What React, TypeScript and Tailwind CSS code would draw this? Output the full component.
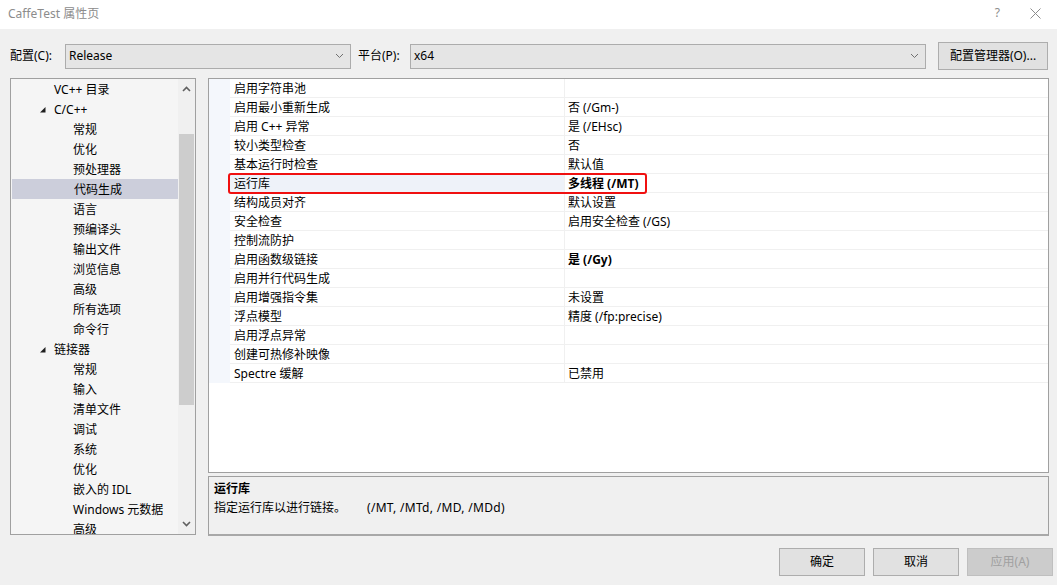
import React from "react";

type Prop = { name: string; value: string; bold?: boolean; selected?: boolean };

const props: Prop[] = [
  { name: "启用字符串池", value: "" },
  { name: "启用最小重新生成", value: "否 (/Gm-)" },
  { name: "启用 C++ 异常", value: "是 (/EHsc)" },
  { name: "较小类型检查", value: "否" },
  { name: "基本运行时检查", value: "默认值" },
  { name: "运行库", value: "多线程 (/MT)", bold: true, selected: true },
  { name: "结构成员对齐", value: "默认设置" },
  { name: "安全检查", value: "启用安全检查 (/GS)" },
  { name: "控制流防护", value: "" },
  { name: "启用函数级链接", value: "是 (/Gy)", bold: true },
  { name: "启用并行代码生成", value: "" },
  { name: "启用增强指令集", value: "未设置" },
  { name: "浮点模型", value: "精度 (/fp:precise)" },
  { name: "启用浮点异常", value: "" },
  { name: "创建可热修补映像", value: "" },
  { name: "Spectre 缓解", value: "已禁用" },
];

type Node = { label: string; level: 1 | 2; open?: boolean; selected?: boolean };

const tree: Node[] = [
  { label: "VC++ 目录", level: 1 },
  { label: "C/C++", level: 1, open: true },
  { label: "常规", level: 2 },
  { label: "优化", level: 2 },
  { label: "预处理器", level: 2 },
  { label: "代码生成", level: 2, selected: true },
  { label: "语言", level: 2 },
  { label: "预编译头", level: 2 },
  { label: "输出文件", level: 2 },
  { label: "浏览信息", level: 2 },
  { label: "高级", level: 2 },
  { label: "所有选项", level: 2 },
  { label: "命令行", level: 2 },
  { label: "链接器", level: 1, open: true },
  { label: "常规", level: 2 },
  { label: "输入", level: 2 },
  { label: "清单文件", level: 2 },
  { label: "调试", level: 2 },
  { label: "系统", level: 2 },
  { label: "优化", level: 2 },
  { label: "嵌入的 IDL", level: 2 },
  { label: "Windows 元数据", level: 2 },
  { label: "高级", level: 2 },
];

function Chevron({ up }: { up?: boolean }) {
  return (
    <svg width="9" height="6" viewBox="0 0 9 6" className="text-[#606060]">
      <path d={up ? "M1 5 L4.5 1.5 L8 5" : "M1 1 L4.5 4.5 L8 1"} fill="none" stroke="currentColor" strokeWidth="1.6" />
    </svg>
  );
}

function Combo({ value, className }: { value: string; className: string }) {
  return (
    <div className={`h-[25px] bg-[#e5e5e5] border border-[#acacac] flex items-center justify-between pl-[3px] pr-[6px] ${className}`}>
      <span>{value}</span>
      <svg width="9" height="6" viewBox="0 0 9 6" className="text-[#707070]">
        <path d="M1 1 L4.5 4.5 L8 1" fill="none" stroke="currentColor" strokeWidth="1" />
      </svg>
    </div>
  );
}

export default function App() {
  return (
    <div className="w-[1057px] h-[585px] bg-[#f0f0f0] flex flex-col text-[12px] text-black [font-family:'Noto_Sans','Noto_Sans_CJK_SC',sans-serif] overflow-hidden">
      {/* Title bar */}
      <div className="h-[29px] bg-white flex items-center justify-between pl-[8px] pr-[16px] shrink-0">
        <span className="text-[#8c8c8c] -mt-[2px]">CaffeTest 属性页</span>
        <div className="flex items-center gap-[30px] -mt-[3px] text-[#8c8c8c]">
          <span className="text-[12px]">?</span>
          <svg width="11" height="11" viewBox="0 0 11 11">
            <path d="M0.5 0.5 L10.5 10.5 M10.5 0.5 L0.5 10.5" stroke="#8c8c8c" strokeWidth="1" />
          </svg>
        </div>
      </div>

      {/* Configuration row */}
      <div className="mt-[13px] h-[28px] flex items-center pl-[10px] shrink-0">
        <span className="w-[55px]">配置(C):</span>
        <Combo value="Release" className="w-[286px]" />
        <span className="ml-[7px] w-[52px]">平台(P):</span>
        <Combo value="x64" className="w-[516px]" />
        <button className="ml-[12px] w-[110px] h-[28px] bg-[#e1e1e1] border border-[#adadad]">配置管理器(O)...</button>
      </div>

      {/* Main area */}
      <div className="mt-[8px] flex pl-[10px] gap-[12px] shrink-0">
        {/* Tree */}
        <div className="w-[186px] h-[457px] border border-[#a0a0a0] bg-[#f5f5f5] flex overflow-hidden">
          <div className="flex-1 overflow-hidden">
            {tree.map((n, i) => (
              <div
                key={i}
                className={`h-[20px] flex items-center pt-[2px] ${n.selected ? "bg-[#cccedb] ml-[1px]" : ""} ${n.level === 1 ? "pl-[43px]" : "pl-[62px]"}`}
              >
                {n.level === 1 && (
                  <span className="w-[14px] -ml-[14px] flex items-center">
                    {n.open && (
                      <svg width="6" height="6" viewBox="0 0 6 6">
                        <polygon points="5.5,0 5.5,5.5 0,5.5" fill="#1e1e1e" />
                      </svg>
                    )}
                  </span>
                )}
                <span className="whitespace-nowrap">{n.label}</span>
              </div>
            ))}
          </div>
          <div className="w-[17px] bg-[#f0f0f0] flex flex-col items-center">
            <div className="h-[20px] flex items-center justify-center">
              <Chevron up />
            </div>
            <div className="h-[35px]" />
            <div className="w-[15px] h-[271px] bg-[#cdcdcd]" />
            <div className="flex-1" />
            <div className="h-[20px] flex items-center justify-center">
              <Chevron />
            </div>
          </div>
        </div>

        {/* Property grid + description */}
        <div className="w-[841px] flex flex-col gap-[3px]">
          <div className="relative h-[395px] border border-[#a0a0a0] bg-white">
            {props.map((p, i) => (
              <div key={i} className="h-[19px] flex">
                <div className="w-[21px] bg-[#f4f7fc]" />
                <div
                  className={`w-[334px] pl-[4px] pt-[2px] border-b border-[#f0f0f0] leading-[16px] whitespace-nowrap ${p.selected ? "bg-[#eef2f9]" : ""}`}
                >
                  {p.name}
                </div>
                <div className="w-px bg-[#f0f0f0]" />
                <div className={`flex-1 pl-[3px] pt-[2px] border-b border-[#f0f0f0] leading-[16px] whitespace-nowrap ${p.bold ? "font-bold" : ""}`}>
                  {p.value}
                </div>
              </div>
            ))}
            <div className="absolute left-[19px] top-[94px] w-[419px] h-[21px] border-2 border-[#f01010] rounded-[3px]" />
          </div>
          <div className="h-[60px] border border-[#a0a0a0] border-b-2 border-b-[#a8a8a8] px-[5px] pt-[2px] leading-[19px]">
            <div className="font-bold">运行库</div>
            <div className="flex">
              <span className="w-[153px]">指定运行库以进行链接。</span>
              <span className="tracking-[0.3px]">(/MT, /MTd, /MD, /MDd)</span>
            </div>
          </div>
        </div>
      </div>

      {/* Buttons */}
      <div className="mt-[12px] flex justify-end gap-[8px] pr-[4px]">
        <button className="w-[86px] h-[28px] bg-[#e1e1e1] border border-[#adadad]">确定</button>
        <button className="w-[86px] h-[28px] bg-[#e1e1e1] border border-[#adadad]">取消</button>
        <button className="w-[86px] h-[28px] bg-[#cccccc] border border-[#bfbfbf] text-[#a0a0a0]">应用(A)</button>
      </div>
    </div>
  );
}
